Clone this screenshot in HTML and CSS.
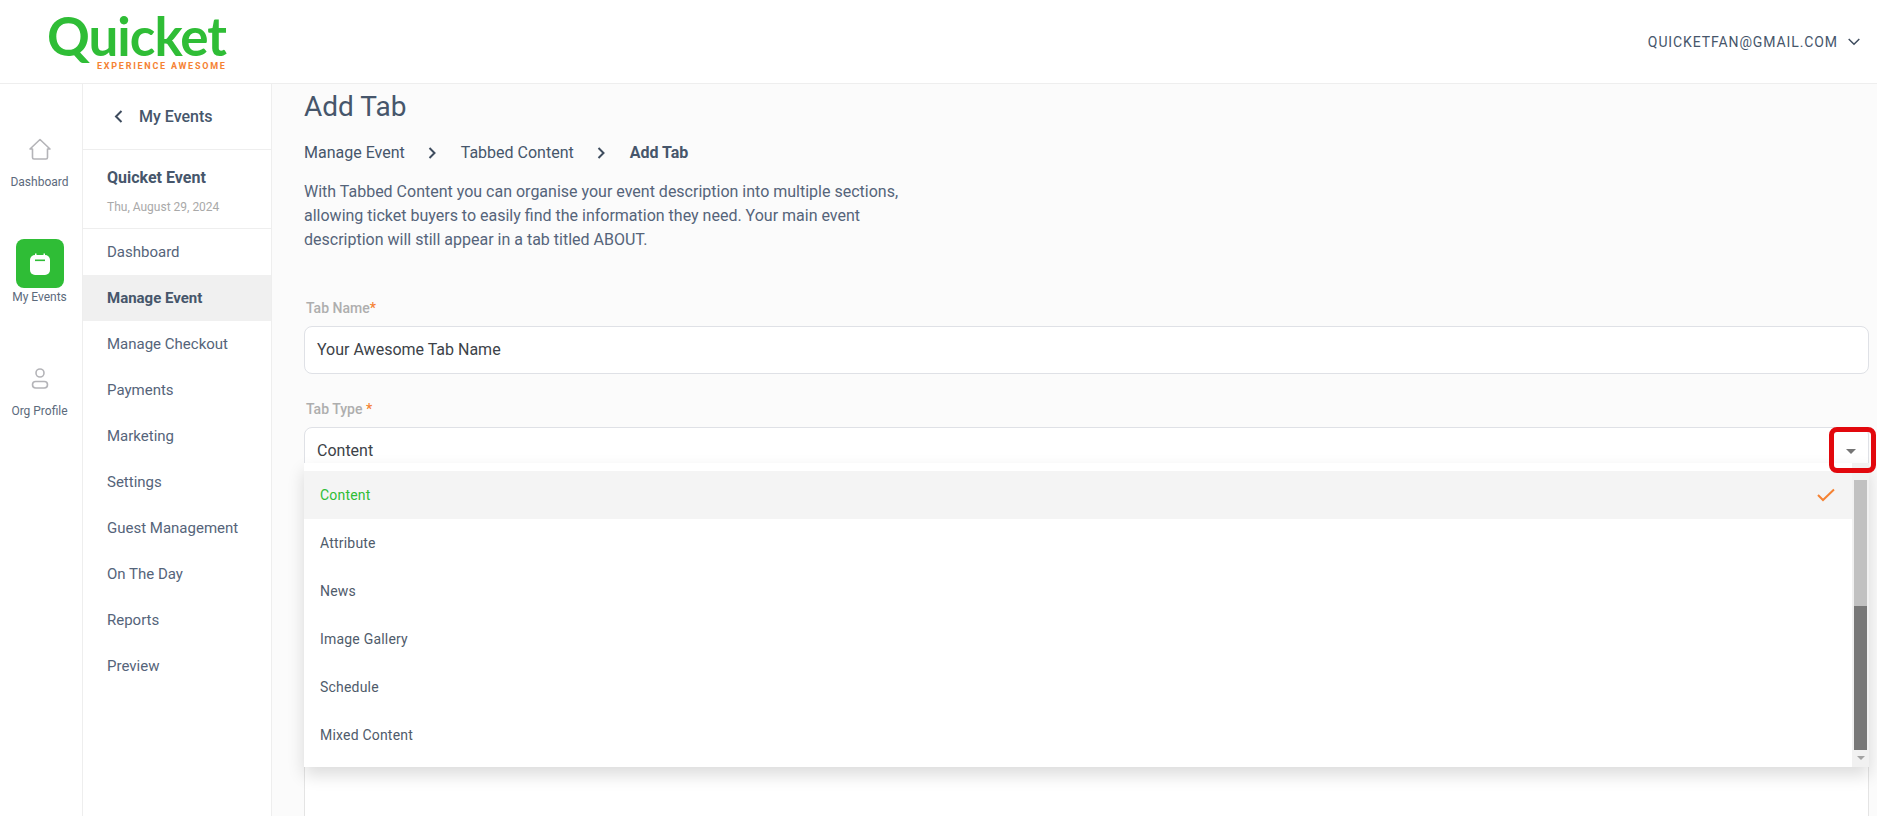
FILE: index.html
```html
<!DOCTYPE html>
<html lang="en">
<head>
    <meta charset="UTF-8">
    <meta name="viewport" content="width=device-width, initial-scale=1.0">
    <title>Add Tab</title>
    <link rel="stylesheet" href="styles.css">
</head>
<body>
    <header class="topbar">
        <div class="logo">
            <span class="logo-name">Quicket</span>
            <span class="logo-tag">EXPERIENCE AWESOME</span>
        </div>
        <div class="account">
            <span>QUICKETFAN@GMAIL.COM</span>
            <svg width="12" height="8" viewBox="0 0 12 8"><path d="M.7 1l5.300 5.300L11.300 1" fill="none" stroke="#3e4c5e" stroke-width="1.5"/></svg>
        </div>
    </header>

    <div class="page">
        <nav class="rail">
            <a class="rail-item">
                <svg width="24" height="24" viewBox="0 0 24 24" fill="none" stroke="#b4b4b8" stroke-width="1.6" stroke-linejoin="round"><path d="M2 12L12 2.500l10 9.500h-2.500v8.500a1.500 1.500 0 0 1-1.500 1.500H6a1.500 1.500 0 0 1-1.500-1.500V12z"/></svg>
                <span>Dashboard</span>
            </a>
            <a class="rail-item rail-active">
                <span class="rail-badge">
                    <svg width="20" height="22" viewBox="0 0 20 22"><path d="M5 0.500h1.500v3H5zM13.500 0.500H15v3h-1.500z" fill="#fff"/><rect y="2" width="20" height="20" rx="5" fill="#fff"/><rect x="5" y="6.500" width="10" height="1.600" fill="#2fbd36"/></svg>
                </span>
                <span>My Events</span>
            </a>
            <a class="rail-item">
                <svg width="18" height="22" viewBox="0 0 18 22" fill="none" stroke="#b4b4b8" stroke-width="1.6"><circle cx="9" cy="5" r="4"/><rect x="1.500" y="13.500" width="15" height="6.500" rx="3.200"/></svg>
                <span>Org Profile</span>
            </a>
        </nav>

        <aside class="sidebar">
            <div class="back">
                <svg width="9" height="13" viewBox="0 0 9 13"><path d="M7.500 1L2 6.500 7.500 12" fill="none" stroke="#3e4c5e" stroke-width="2"/></svg>
                <span>My Events</span>
            </div>
            <div class="event-info">
                <div class="event-name">Quicket Event</div>
                <div class="event-date">Thu, August 29, 2024</div>
            </div>
            <ul class="menu">
                <li>Dashboard</li>
                <li class="menu-active">Manage Event</li>
                <li>Manage Checkout</li>
                <li>Payments</li>
                <li>Marketing</li>
                <li>Settings</li>
                <li>Guest Management</li>
                <li>On The Day</li>
                <li>Reports</li>
                <li>Preview</li>
            </ul>
        </aside>

        <main class="content">
            <h1>Add Tab</h1>
            <div class="crumbs">
                <span>Manage Event</span>
                <svg width="9" height="12" viewBox="0 0 9 12"><path d="M1.500 1l5 5-5 5" fill="none" stroke="#3e4c5e" stroke-width="2"/></svg>
                <span>Tabbed Content</span>
                <svg width="9" height="12" viewBox="0 0 9 12"><path d="M1.500 1l5 5-5 5" fill="none" stroke="#3e4c5e" stroke-width="2"/></svg>
                <strong>Add Tab</strong>
            </div>
            <p class="intro">With Tabbed Content you can organise your event description into multiple sections, allowing ticket buyers to easily find the information they need. Your main event description will still appear in a tab titled ABOUT.</p>

            <label class="field-label">Tab Name<em>*</em></label>
            <div class="field">Your Awesome Tab Name</div>

            <label class="field-label">Tab Type <em>*</em></label>
            <div class="field field-select">
                <span>Content</span>
                <i class="caret"></i>
            </div>
            <div class="editor"></div>

            <div class="dropdown">
                <ul class="options">
                    <li class="option-selected">
                        <span>Content</span>
                        <svg width="18" height="14" viewBox="0 0 18 14"><path d="M1 7l5 5L17 1.500" fill="none" stroke="#f58233" stroke-width="2"/></svg>
                    </li>
                    <li>Attribute</li>
                    <li>News</li>
                    <li>Image Gallery</li>
                    <li>Schedule</li>
                    <li>Mixed Content</li>
                </ul>
                <div class="scrollbar">
                    <div class="track"><div class="thumb"></div></div>
                    <i class="arrow-down"></i>
                </div>
            </div>
            <div class="highlight"></div>
        </main>
    </div>
</body>
</html>
```

FILE: styles.css
```css
* {
    box-sizing: border-box;
}
html, body {
    height: 100%;
}
body {
    margin: 0;
    font-family: Roboto, Arial, sans-serif;
    color: #46566b;
    background-color: #fff;
    overflow: hidden;
    display: flex;
    flex-direction: column;
}
.topbar {
    height: 84px;
    flex: none;
    display: flex;
    align-items: center;
    justify-content: space-between;
    padding: 0 17px 0 47px;
    border-bottom: 1px solid #eeeeee;
}
.logo {
    display: flex;
    flex-direction: column;
}
.logo-name {
    font-family: Lato, sans-serif;
    font-weight: 700;
    font-size: 53px;
    line-height: 46px;
    letter-spacing: -1px;
    color: #2fbd36;
}
.logo-tag {
    font-size: 9px;
    font-weight: 700;
    line-height: 10px;
    letter-spacing: 1.750px;
    color: #f58233;
    margin: 2px 0 0 50px;
    white-space: nowrap;
}
.account {
    display: flex;
    align-items: center;
    gap: 10px;
    font-size: 14px;
    letter-spacing: 0.900px;
    color: #46566b;
}
.page {
    flex: 1;
    display: flex;
    min-height: 0;
}
.rail {
    width: 83px;
    flex: none;
    padding: 53px 3px 0 0;
    border-right: 1px solid #eeeeee;
}
.rail-item {
    height: 115px;
    display: flex;
    flex-direction: column;
    align-items: center;
    font-size: 12px;
    color: #5c6a7c;
}
.rail-item svg {
    margin-bottom: 14px;
    flex: none;
}
.rail-active {
    margin-top: -13px;
    height: 129px;
}
.rail-badge {
    width: 48px;
    height: 49px;
    border-radius: 8px;
    background-color: #2fbd36;
    display: flex;
    align-items: center;
    justify-content: center;
    margin-bottom: 2px;
}
.rail-badge svg {
    margin: 0;
}
.sidebar {
    width: 189px;
    flex: none;
    border-right: 1px solid #eeeeee;
}
.back {
    height: 66px;
    display: flex;
    align-items: center;
    gap: 16px;
    padding-left: 31px;
    font-size: 16px;
    font-weight: 500;
    border-bottom: 1px solid #eeeeee;
}
.event-info {
    height: 79px;
    padding: 18px 0 0 24px;
    border-bottom: 1px solid #eeeeee;
}
.event-name {
    font-size: 16px;
    font-weight: 700;
    line-height: 20px;
}
.event-date {
    font-size: 12px;
    line-height: 16px;
    color: #a9a9a9;
    margin-top: 11px;
}
.menu {
    list-style: none;
    margin: 0;
    padding: 0;
    color: #55647a;
}
.menu li {
    height: 46px;
    line-height: 46px;
    padding-left: 24px;
    font-size: 15px;
}
.menu .menu-active {
    background-color: #f0f0f0;
    font-weight: 700;
    color: #46566b;
}
.content {
    flex: 1;
    position: relative;
    min-width: 0;
    overflow: hidden;
    padding: 0 8px 0 32px;
    background-color: #fbfbfb;
}
h1 {
    margin: 0;
    font-size: 28px;
    font-weight: 400;
    line-height: 46px;
}
.crumbs {
    display: flex;
    align-items: center;
    gap: 23.500px;
    margin-top: 11px;
    font-size: 16px;
    line-height: 24px;
}
.crumbs strong {
    font-weight: 700;
}
.intro {
    width: 610px;
    margin: 15px 0 0;
    font-size: 16px;
    line-height: 24px;
    color: #55647a;
}
.field-label {
    display: block;
    margin: 46px 0 0 2px;
    font-size: 14px;
    font-weight: 500;
    line-height: 20px;
    color: #aeaeae;
}
.field-label em {
    font-style: normal;
    color: #f58233;
}
.field {
    height: 48px;
    line-height: 46px;
    margin-top: 8px;
    padding: 0 12px;
    font-size: 16px;
    color: #3c4248;
    background-color: #fff;
    border: 1px solid #dfe1e6;
    border-radius: 8px;
}
.field + .field-label {
    margin-top: 25px;
}
.field-select {
    display: flex;
    align-items: center;
    justify-content: space-between;
    padding-right: 12px;
}
.caret {
    width: 0;
    height: 0;
    border-left: 5px solid transparent;
    border-right: 5px solid transparent;
    border-top: 5px solid #757575;
}
.editor {
    height: 500px;
    margin-top: 20px;
    background-color: #fff;
    border: 1px solid #e4e4e4;
}
.dropdown {
    position: absolute;
    left: 32px;
    right: 8px;
    top: 379px;
    height: 304px;
    display: flex;
    background-color: #fff;
    box-shadow: 0 8px 16px rgba(0,0,0,0.14);
}
.options {
    flex: 1;
    list-style: none;
    margin: 0;
    padding: 8px 0 0;
}
.options li {
    height: 48px;
    display: flex;
    align-items: center;
    justify-content: space-between;
    padding: 0 17px 0 16px;
    font-size: 14px;
    letter-spacing: 0.200px;
    color: #4f5b6b;
}
.options .option-selected {
    color: #2fbd36;
    background-color: #f4f4f4;
}
.scrollbar {
    width: 17px;
    flex: none;
    display: flex;
    flex-direction: column;
    align-items: center;
    padding-top: 17px;
    background-color: #f1f1f1;
}
.track {
    flex: none;
    width: 13px;
    height: 270px;
    background-color: #c1c1c1;
}
.thumb {
    height: 144px;
    margin-top: 126px;
    background-color: #787878;
}
.arrow-down {
    width: 0;
    height: 0;
    flex: none;
    margin-top: 6px;
    border-left: 4px solid transparent;
    border-right: 4px solid transparent;
    border-top: 4px solid #a3a3a3;
}
.highlight {
    position: absolute;
    left: 1557px;
    top: 343px;
    width: 47px;
    height: 46px;
    border: 5px solid #e2080d;
    border-radius: 8px;
}
```
